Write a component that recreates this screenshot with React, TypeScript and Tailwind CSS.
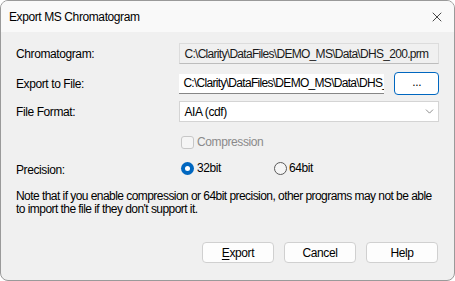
import { X, ChevronDown } from 'lucide-react';

const font = { fontFamily: '"Liberation Sans", Arial, sans-serif' };

export default function App() {
  return (
    <div className="w-[455px] h-[281px] bg-white">
      <div
        className="w-[455px] h-[281px] bg-[#f0f0f0] border border-[#9a9a9a] rounded-b-[8px] rounded-t-[8px] overflow-hidden flex flex-col text-[12px] tracking-[-0.4px] text-black"
        style={font}
      >
        {/* title bar */}
        <div className="h-[31px] bg-[#f9f9f9] flex items-center justify-between pl-[8px] pr-[9px] shrink-0">
          <span className="text-[12px] leading-none">Export MS Chromatogram</span>
          <X className="w-[16px] h-[16px] text-[#1a1a1a]" strokeWidth={1.2} />
        </div>

        <div className="flex flex-col px-[15px] pt-[11px]">
          <div className="flex items-center h-[21px]">
            <span className="w-[165px]">Chromatogram:</span>
            <div className="w-[262px] h-[21px] border border-[#dcdcdc] border-b-[#bdbdbd] bg-[#f0f0f0] flex items-center px-[4px] text-[#1a1a1a] whitespace-nowrap overflow-hidden tracking-[-0.7px]">
              C:\Clarity\DataFiles\DEMO_MS\Data\DHS_200.prm
            </div>
          </div>

          <div className="flex items-center h-[23px] mt-[8px]">
            <span className="w-[165px]">Export to File:</span>
            <div className="w-[207px] h-[20px] bg-white border-b border-[#868686] flex items-center px-[4px] overflow-hidden whitespace-nowrap tracking-[-0.7px]">
              C:\Clarity\DataFiles\DEMO_MS\Data\DHS_
            </div>
            <div className="ml-[10px] w-[45px] h-[23px] bg-white border-[1.5px] border-[#0067c0] rounded-[4px] flex items-center justify-center leading-none pb-[3px]">
              ...
            </div>
          </div>

          <div className="flex items-center h-[21px] mt-[6px]">
            <span className="w-[165px]">File Format:</span>
            <div className="w-[262px] h-[21px] bg-white border border-[#d4d4d4] flex items-center justify-between pl-[4px] pr-[2px]">
              <span>AIA (cdf)</span>
              <ChevronDown className="w-[13px] h-[13px] text-[#5f5f5f]" strokeWidth={1.3} />
            </div>
          </div>

          <div className="flex items-center h-[14px] mt-[13px] pl-[165px]">
            <div className="w-[13px] h-[13px] border border-[#c7c7c7] rounded-[3px] bg-[#f5f5f5]" />
            <span className="ml-[3px] text-[#8a8a8a]">Compression</span>
          </div>

          <div className="flex items-center h-[14px] mt-[12px]">
            <span className="w-[165px] pt-[4px]">Precision:</span>
            <div className="w-[13px] h-[13px] rounded-full bg-[#0067c0] flex items-center justify-center">
              <div className="w-[5px] h-[5px] rounded-full bg-white" />
            </div>
            <span className="ml-[3px] w-[77px]">32bit</span>
            <div className="w-[13px] h-[13px] rounded-full border border-[#5a5a5a] bg-[#f5f5f5]" />
            <span className="ml-[2px]">64bit</span>
          </div>

          <p className="mt-[15px] leading-[13px] tracking-[-0.55px]">
            Note that if you enable compression or 64bit precision, other programs may not be able to import the file if they don't support it.
          </p>

          <div className="flex justify-end gap-[10px] mt-[26px] pr-[1px]">
            <div className="w-[72px] h-[21px] bg-[#fdfdfd] border border-[#d0d0d0] rounded-[4px] flex items-center justify-center">
              <span><span className="underline underline-offset-2">E</span>xport</span>
            </div>
            <div className="w-[72px] h-[21px] bg-[#fdfdfd] border border-[#d0d0d0] rounded-[4px] flex items-center justify-center">
              Cancel
            </div>
            <div className="w-[72px] h-[21px] bg-[#fdfdfd] border border-[#d0d0d0] rounded-[4px] flex items-center justify-center">
              Help
            </div>
          </div>
        </div>
      </div>
    </div>
  );
}
